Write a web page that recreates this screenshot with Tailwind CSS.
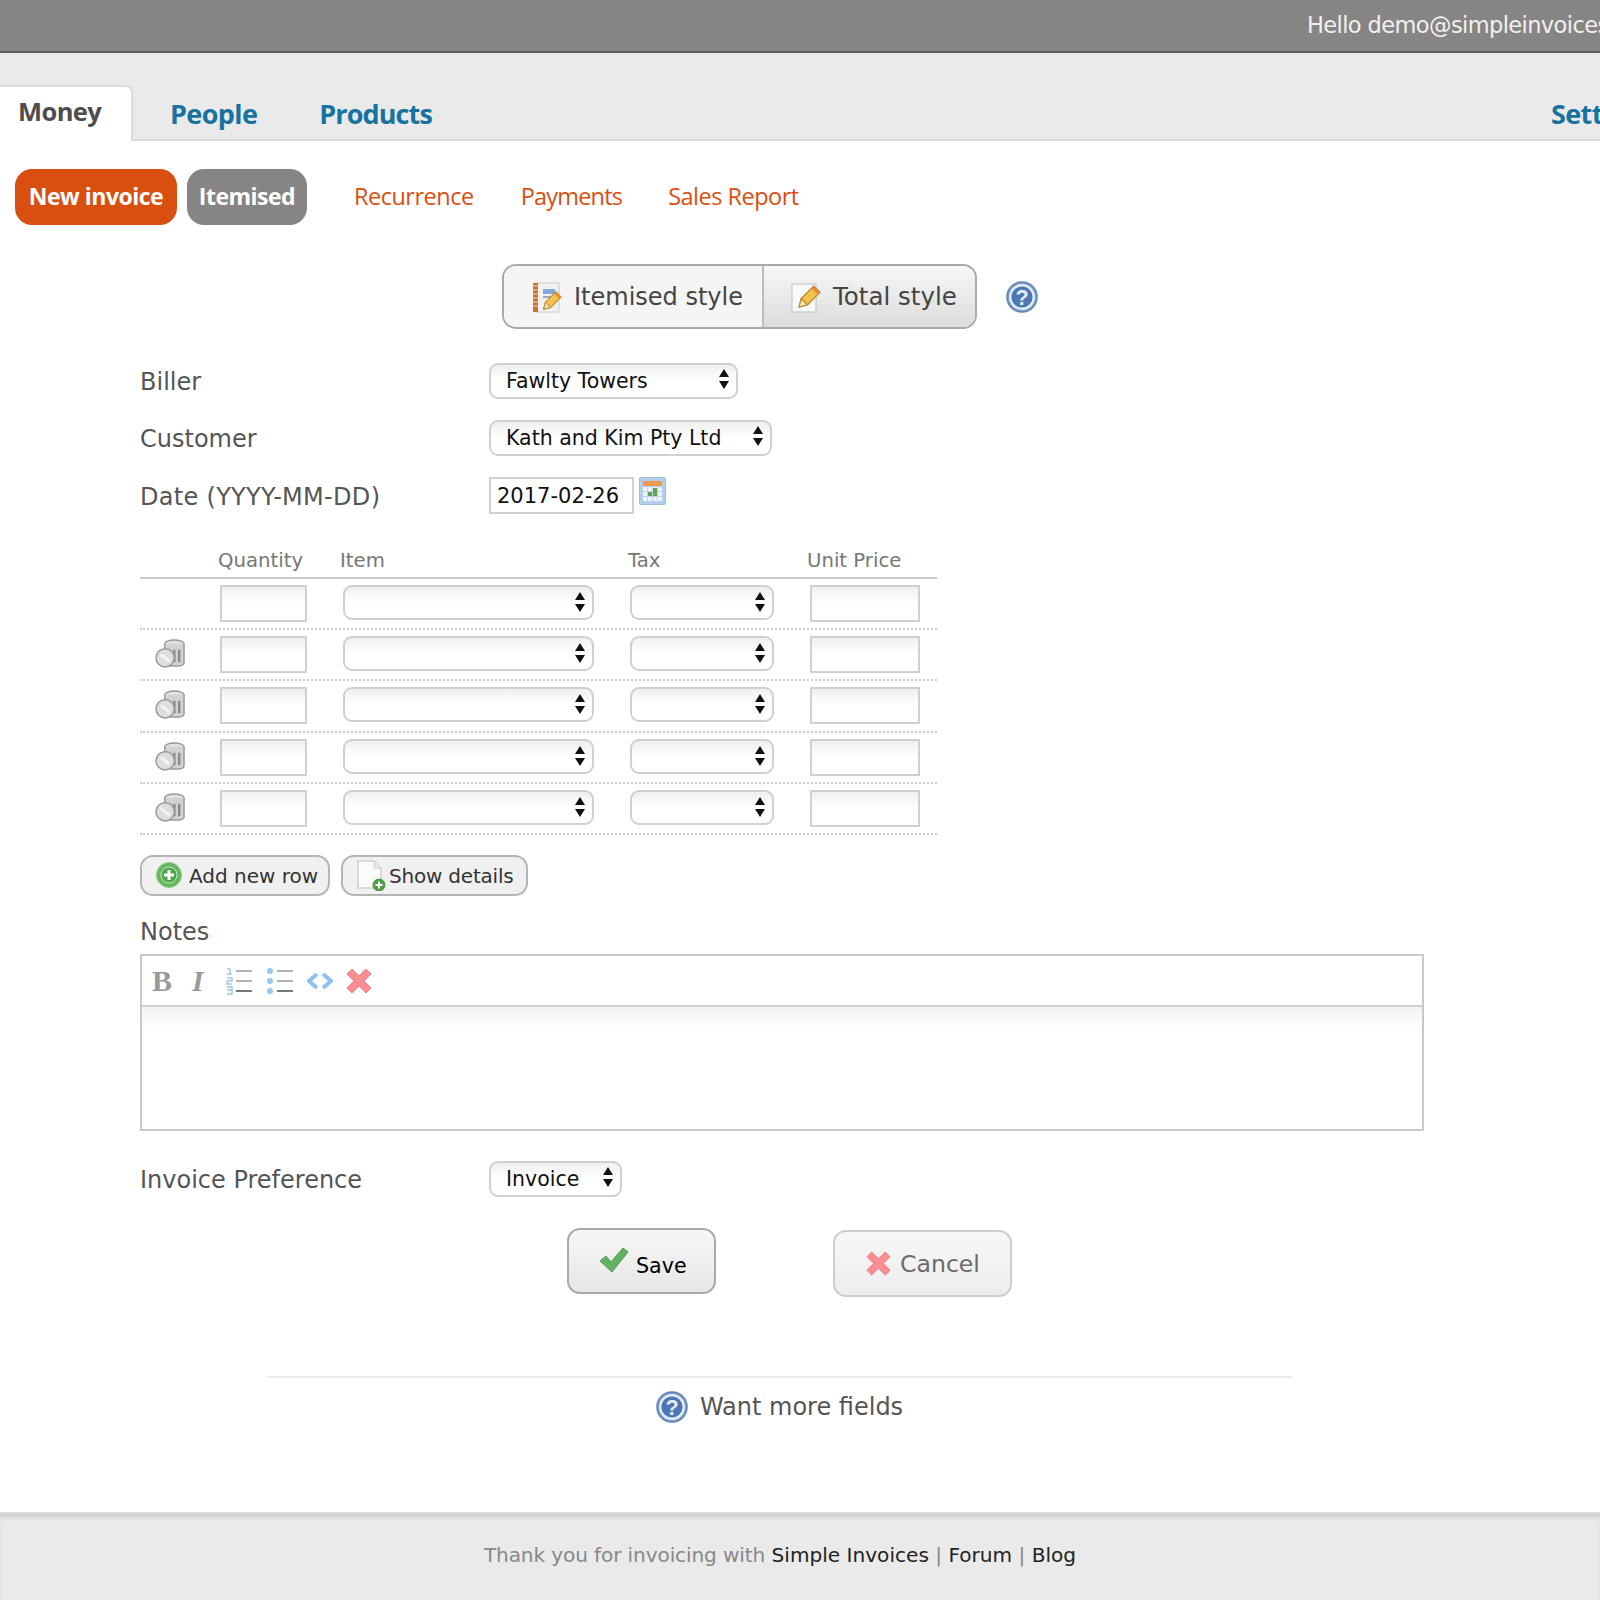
<!DOCTYPE html>
<html lang="en" class="overflow-hidden">
<head>
    <meta charset="UTF-8">
    <title>Simple Invoices - New invoice</title>
    <script src="https://cdn.jsdelivr.net/npm/@tailwindcss/browser@4"></script>
</head>
<body class="w-[1600px] h-[1600px] overflow-hidden bg-white text-[#555] font-['DejaVu_Sans',sans-serif]">

    <!-- shared icons -->
    <svg class="hidden" width="0" height="0">
        <symbol id="arrows" viewBox="0 0 12 22"><path d="M6 1l5 8H1zM6 21l-5-8h10z" fill="#111"/></symbol>
        <symbol id="trash" viewBox="0 0 32 30">
            <ellipse cx="20" cy="5" rx="10" ry="4" fill="#e2e2e2" stroke="#999" stroke-width="1.5"/>
            <path d="M10 5v20c0 2 4 3 10 3s10-1 10-3V5" fill="#d2d2d2" stroke="#999" stroke-width="1.5"/>
            <path d="M20 11v13M25 11v13" stroke="#8b8b8b" stroke-width="2.5"/>
            <circle cx="10.5" cy="19.5" r="9.5" fill="#dedede" stroke="#9a9a9a" stroke-width="1.5"/>
            <path d="M6 16l9 7" stroke="#f5f5f5" stroke-width="3"/>
        </symbol>
        <symbol id="help" viewBox="0 0 34 34">
            <circle cx="17" cy="17" r="16" fill="#7f9fcb" stroke="#5d84b9" stroke-width="1.5"/>
            <circle cx="17" cy="17" r="12.5" fill="#4d77b2" stroke="#e6eef8" stroke-width="2.5"/>
            <text x="17" y="25" text-anchor="middle" font-size="23" font-weight="700" fill="#e8eef7" font-family="Liberation Sans, sans-serif">?</text>
        </symbol>
        <symbol id="cross" viewBox="0 0 28 28"><path d="M7 2l7 7 7-7 5 5-7 7 7 7-5 5-7-7-7 7-5-5 7-7-7-7z" fill="#fb8e93" stroke="#f27d83" stroke-width="1"/></symbol>
        <symbol id="pencil" viewBox="0 0 24 24">
            <path d="M3 22l2-8L17 2l6 6-12 12z" fill="#f2c14e" stroke="#b9822a" stroke-width="1.2"/>
            <path d="M3 22l2-8 6 6z" fill="#f7e3b5" stroke="#b9822a" stroke-width="1"/>
            <path d="M15 4l6 6 2-2-6-6z" fill="#e58b3a"/>
        </symbol>
    </svg>

    <header class="h-[53px] bg-[#868583] border-b-2 border-[#5f5e5c] pl-[1307px] pt-[9px] text-[22.5px] tracking-[-0.6px] leading-[32px] text-[#f1f1f1] whitespace-nowrap overflow-hidden">Hello demo@simpleinvoices</header>

    <nav class="h-[88px] bg-[#eaeaea] border-b-2 border-[#dcdcdc] flex items-end font-['Open_Sans',sans-serif] font-bold text-[27px] tracking-[-0.6px] text-[#17729f] whitespace-nowrap">
        <a class="shrink-0 w-[133px] h-[56px] -mb-[2px] bg-white border-t-2 border-r-2 border-[#dcdcdc] rounded-tr-[8px] pl-[18px] pt-[5px] text-[25.5px] text-[#4d4d4d]">Money</a>
        <a class="shrink-0 ml-[37px] pb-[5px]">People</a>
        <a class="shrink-0 ml-[62px] pb-[5px] tracking-[-0.9px]">Products</a>
        <a class="shrink-0 ml-[1119px] pb-[5px]">Sett</a>
    </nav>

    <div class="mt-[28px] ml-[15px] h-[56px] flex items-center font-['Open_Sans',sans-serif] text-[23.5px] tracking-[-0.5px] text-[#d94f10] whitespace-nowrap">
        <a class="w-[162px] h-[56px] flex items-center justify-center rounded-[17px] bg-[#d94f10] pb-[2px] text-[23px] text-white font-bold">New invoice</a>
        <a class="ml-[10px] w-[120px] h-[56px] flex items-center justify-center rounded-[17px] bg-[#868583] pb-[2px] text-[23px] text-white font-bold">Itemised</a>
        <a class="ml-[47px]">Recurrence</a>
        <a class="ml-[47px] tracking-[-0.8px]">Payments</a>
        <a class="ml-[46px]">Sales Report</a>
    </div>

    <!-- invoice style switch -->
    <div class="mt-[39px] ml-[502px] flex items-center">
        <div class="w-[475px] h-[65px] flex border-2 border-[#a9a9a9] rounded-[14px] overflow-hidden text-[#444] whitespace-nowrap">
            <a class="w-[260px] bg-[#f5f5f5] border-r-2 border-[#bdbdbd] flex items-center pl-[28px]">
                <svg width="30" height="32" viewBox="0 0 30 32" class="shrink-0">
                    <rect x="3" y="2" width="24" height="29" fill="#f1f1f1" stroke="#ccc"/>
                    <rect x="1" y="2" width="5" height="29" fill="#c8742f"/>
                    <path d="M1 5h5M1 9h5M1 13h5M1 17h5M1 21h5M1 25h5" stroke="#f0d9bf" stroke-width="1"/>
                    <path d="M11 8h12v5H11z" fill="#7fa8dc"/>
                    <path d="M11 16h8" stroke="#9ab" stroke-width="2"/>
                    <use href="#pencil" x="9" y="9" width="21" height="21"/>
                </svg>
                <span class="ml-[12px] pt-[1px] text-[24px]">Itemised style</span>
            </a>
            <a class="flex-1 bg-linear-to-b from-[#f7f7f7] to-[#dcdcdc] flex items-center pl-[27px]">
                <svg width="30" height="32" viewBox="0 0 30 32" class="shrink-0">
                    <rect x="1" y="3" width="24" height="28" fill="#fafafa" stroke="#cfcfcf" stroke-width="1.5"/>
                    <use href="#pencil" x="5" y="3" width="25" height="25"/>
                </svg>
                <span class="ml-[12px] pt-[1px] text-[24.5px]">Total style</span>
            </a>
        </div>
        <svg width="32" height="34" class="ml-[29px]"><use href="#help"/></svg>
    </div>

    <main class="pl-[140px] text-[24px]">
        <div class="mt-[33px] h-[36px] flex items-center">
            <label class="w-[349px] pt-[3px]">Biller</label>
            <div class="relative w-[249px] h-[36px]">
                <select class="w-full h-full appearance-none rounded-[9px] border-2 border-[#d0d0d0] bg-linear-to-b from-[#eef0f0] to-white to-50% pl-[15px] text-[20.5px] text-[#111]"><option>Fawlty Towers</option></select>
                <svg class="absolute right-[8px] top-[6px] pointer-events-none" width="12" height="22"><use href="#arrows"/></svg>
            </div>
        </div>
        <div class="mt-[21px] h-[36px] flex items-center">
            <label class="w-[349px] pt-[4px]">Customer</label>
            <div class="relative w-[283px] h-[36px]">
                <select class="w-full h-full appearance-none rounded-[9px] border-2 border-[#d0d0d0] bg-linear-to-b from-[#eef0f0] to-white to-50% pl-[15px] text-[20.5px] text-[#111]"><option>Kath and Kim Pty Ltd</option></select>
                <svg class="absolute right-[8px] top-[6px] pointer-events-none" width="12" height="22"><use href="#arrows"/></svg>
            </div>
        </div>
        <div class="mt-[22px] h-[37px] flex items-center">
            <label class="w-[349px] pt-[3px] tracking-[0.3px]">Date (YYYY-MM-DD)</label>
            <input value="2017-02-26" class="w-[145px] h-[37px] border-2 border-[#d0d0d0] pl-[6px] pt-[1px] text-[21px] text-[#111]">
            <svg width="27" height="28" viewBox="0 0 27 28" class="ml-[5px] self-start">
                <rect x="0.5" y="0.5" width="26" height="27" rx="1" fill="#b4cfee" stroke="#9cbce0"/>
                <rect x="4" y="4" width="19" height="5" fill="#f59a4c"/>
                <rect x="4" y="10" width="19" height="14" fill="#eef3fa"/>
                <path d="M4 14.500h19M4 19.500h19M8.500 10v14M13.500 10v14M18.500 10v14" stroke="#c6d3e4" stroke-width="1"/>
                <path d="M9 15h4v4H9zM14 11h4v4h-4zM14 15h4v4h-4z" fill="#57a55a"/>
            </svg>
        </div>

        <!-- invoice lines -->
        <div class="mt-[33px] w-[797px]">
            <div class="h-[32px] flex border-b-2 border-[#c9c9c9] pt-[1px] text-[19.7px] leading-[26px] text-[#777]">
                <span class="ml-[78px] w-[122px]">Quantity</span>
                <span class="w-[288px]">Item</span>
                <span class="w-[179px]">Tax</span>
                <span>Unit Price</span>
            </div>
            <div class="h-[51.2px] flex items-start pt-[6px] border-b-2 border-dotted border-[#ccc]">
                <span class="w-[80px]"></span>
                <input class="w-[87px] h-[37px] border-2 border-[#d0d0d0] bg-linear-to-b from-[#eef0f0] to-white to-50%">
                <div class="relative ml-[36px] w-[251px] h-[35px]"><select class="w-full h-full appearance-none rounded-[9px] border-2 border-[#d0d0d0] bg-linear-to-b from-[#eef0f0] to-white to-50%"></select><svg class="absolute right-[8px] top-[6px] pointer-events-none" width="12" height="22"><use href="#arrows"/></svg></div>
                <div class="relative ml-[36px] w-[144px] h-[35px]"><select class="w-full h-full appearance-none rounded-[9px] border-2 border-[#d0d0d0] bg-linear-to-b from-[#eef0f0] to-white to-50%"></select><svg class="absolute right-[8px] top-[6px] pointer-events-none" width="12" height="22"><use href="#arrows"/></svg></div>
                <input class="ml-[36px] w-[110px] h-[37px] border-2 border-[#d0d0d0] bg-linear-to-b from-[#eef0f0] to-white to-50%">
            </div>
            <div class="h-[51.2px] flex items-start pt-[6px] border-b-2 border-dotted border-[#ccc]">
                <span class="w-[80px] pl-[15px] pt-[3px]"><svg width="31" height="29"><use href="#trash"/></svg></span>
                <input class="w-[87px] h-[37px] border-2 border-[#d0d0d0] bg-linear-to-b from-[#eef0f0] to-white to-50%">
                <div class="relative ml-[36px] w-[251px] h-[35px]"><select class="w-full h-full appearance-none rounded-[9px] border-2 border-[#d0d0d0] bg-linear-to-b from-[#eef0f0] to-white to-50%"></select><svg class="absolute right-[8px] top-[6px] pointer-events-none" width="12" height="22"><use href="#arrows"/></svg></div>
                <div class="relative ml-[36px] w-[144px] h-[35px]"><select class="w-full h-full appearance-none rounded-[9px] border-2 border-[#d0d0d0] bg-linear-to-b from-[#eef0f0] to-white to-50%"></select><svg class="absolute right-[8px] top-[6px] pointer-events-none" width="12" height="22"><use href="#arrows"/></svg></div>
                <input class="ml-[36px] w-[110px] h-[37px] border-2 border-[#d0d0d0] bg-linear-to-b from-[#eef0f0] to-white to-50%">
            </div>
            <div class="h-[51.2px] flex items-start pt-[6px] border-b-2 border-dotted border-[#ccc]">
                <span class="w-[80px] pl-[15px] pt-[3px]"><svg width="31" height="29"><use href="#trash"/></svg></span>
                <input class="w-[87px] h-[37px] border-2 border-[#d0d0d0] bg-linear-to-b from-[#eef0f0] to-white to-50%">
                <div class="relative ml-[36px] w-[251px] h-[35px]"><select class="w-full h-full appearance-none rounded-[9px] border-2 border-[#d0d0d0] bg-linear-to-b from-[#eef0f0] to-white to-50%"></select><svg class="absolute right-[8px] top-[6px] pointer-events-none" width="12" height="22"><use href="#arrows"/></svg></div>
                <div class="relative ml-[36px] w-[144px] h-[35px]"><select class="w-full h-full appearance-none rounded-[9px] border-2 border-[#d0d0d0] bg-linear-to-b from-[#eef0f0] to-white to-50%"></select><svg class="absolute right-[8px] top-[6px] pointer-events-none" width="12" height="22"><use href="#arrows"/></svg></div>
                <input class="ml-[36px] w-[110px] h-[37px] border-2 border-[#d0d0d0] bg-linear-to-b from-[#eef0f0] to-white to-50%">
            </div>
            <div class="h-[51.2px] flex items-start pt-[6px] border-b-2 border-dotted border-[#ccc]">
                <span class="w-[80px] pl-[15px] pt-[3px]"><svg width="31" height="29"><use href="#trash"/></svg></span>
                <input class="w-[87px] h-[37px] border-2 border-[#d0d0d0] bg-linear-to-b from-[#eef0f0] to-white to-50%">
                <div class="relative ml-[36px] w-[251px] h-[35px]"><select class="w-full h-full appearance-none rounded-[9px] border-2 border-[#d0d0d0] bg-linear-to-b from-[#eef0f0] to-white to-50%"></select><svg class="absolute right-[8px] top-[6px] pointer-events-none" width="12" height="22"><use href="#arrows"/></svg></div>
                <div class="relative ml-[36px] w-[144px] h-[35px]"><select class="w-full h-full appearance-none rounded-[9px] border-2 border-[#d0d0d0] bg-linear-to-b from-[#eef0f0] to-white to-50%"></select><svg class="absolute right-[8px] top-[6px] pointer-events-none" width="12" height="22"><use href="#arrows"/></svg></div>
                <input class="ml-[36px] w-[110px] h-[37px] border-2 border-[#d0d0d0] bg-linear-to-b from-[#eef0f0] to-white to-50%">
            </div>
            <div class="h-[51.2px] flex items-start pt-[6px] border-b-2 border-dotted border-[#ccc]">
                <span class="w-[80px] pl-[15px] pt-[3px]"><svg width="31" height="29"><use href="#trash"/></svg></span>
                <input class="w-[87px] h-[37px] border-2 border-[#d0d0d0] bg-linear-to-b from-[#eef0f0] to-white to-50%">
                <div class="relative ml-[36px] w-[251px] h-[35px]"><select class="w-full h-full appearance-none rounded-[9px] border-2 border-[#d0d0d0] bg-linear-to-b from-[#eef0f0] to-white to-50%"></select><svg class="absolute right-[8px] top-[6px] pointer-events-none" width="12" height="22"><use href="#arrows"/></svg></div>
                <div class="relative ml-[36px] w-[144px] h-[35px]"><select class="w-full h-full appearance-none rounded-[9px] border-2 border-[#d0d0d0] bg-linear-to-b from-[#eef0f0] to-white to-50%"></select><svg class="absolute right-[8px] top-[6px] pointer-events-none" width="12" height="22"><use href="#arrows"/></svg></div>
                <input class="ml-[36px] w-[110px] h-[37px] border-2 border-[#d0d0d0] bg-linear-to-b from-[#eef0f0] to-white to-50%">
            </div>
        </div>

        <div class="mt-[20px] flex gap-[11px] text-[20px] text-[#333] whitespace-nowrap">
            <a class="w-[190px] h-[41px] flex items-center pl-[14px] rounded-[13px] border-2 border-[#b5b5b5] bg-[#f0f0f0]">
                <svg width="26" height="26" viewBox="0 0 26 26" class="shrink-0">
                    <circle cx="13" cy="13" r="12.5" fill="#66b85f" stroke="#8dc987"/>
                    <circle cx="13" cy="13" r="8" fill="#4fa549" stroke="#c6e6c2"/>
                    <path d="M13 8v10M8 13h10" stroke="#fff" stroke-width="3"/>
                </svg>
                <span class="ml-[7px] pt-[1px]">Add new row</span>
            </a>
            <a class="w-[187px] h-[41px] flex items-center pl-[13px] rounded-[13px] border-2 border-[#b5b5b5] bg-[#f0f0f0]">
                <svg width="30" height="32" viewBox="0 0 30 32" class="shrink-0">
                    <path d="M2 2h16l7 7v20H2z" fill="#fbfbfb" stroke="#cfcfcf" stroke-width="1.5"/>
                    <path d="M18 2v7h7" fill="#e6e6e6" stroke="#cfcfcf"/>
                    <circle cx="23" cy="26" r="6.5" fill="#4f9f49"/>
                    <path d="M23 22.5v7M19.5 26h7" stroke="#fff" stroke-width="2"/>
                </svg>
                <span class="ml-[3px] pt-[1px] tracking-[-0.2px]">Show details</span>
            </a>
        </div>

        <div class="mt-[19px] h-[39px] pt-[2px] leading-[30px]">Notes</div>

        <div class="w-[1284px] h-[177px] border-2 border-[#c9c9c9]">
            <div class="h-[51px] border-b-2 border-[#d0d0d0] flex items-center pl-[10px] pt-[1px]">
                <span class="w-[40px] font-['Liberation_Serif',serif] font-bold text-[30px] leading-none text-[#999]">B</span>
                <span class="w-[34px] font-['Liberation_Serif',serif] font-bold italic text-[30px] leading-none text-[#999]">I</span>
                <svg width="28" height="28" viewBox="0 0 28 28" class="mr-[12px]">
                    <path d="M1 2h3v5M1 7h5M1 11h5v3H1v3h5M1 20h5v3H1h5v4H1" stroke="#9cc5ef" stroke-width="1.4" fill="none"/>
                    <path d="M10 4h16M10 14h16" stroke="#999" stroke-width="1.6"/><path d="M10 24h16" stroke="#777" stroke-width="2"/>
                </svg>
                <svg width="28" height="28" viewBox="0 0 28 28" class="mr-[13px]">
                    <circle cx="4" cy="4" r="3" fill="#9cc5ef"/><circle cx="4" cy="14" r="3" fill="#9cc5ef"/><circle cx="4" cy="24" r="3" fill="#9cc5ef"/>
                    <path d="M11 4h16M11 14h16" stroke="#999" stroke-width="1.6"/><path d="M11 24h16" stroke="#777" stroke-width="2"/>
                </svg>
                <svg width="26" height="16" viewBox="0 0 26 16" class="mr-[12px]"><path d="M10 1L2 8l8 7M16 1l8 7-8 7" stroke="#8fc0f0" stroke-width="4" fill="none"/></svg>
                <svg width="28" height="28"><use href="#cross"/></svg>
            </div>
            <div class="h-[20px] bg-linear-to-b from-[#f0f2f2] to-white"></div>
        </div>

        <div class="mt-[29px] h-[36px] flex items-center">
            <label class="w-[349px] pt-[4px]">Invoice Preference</label>
            <div class="relative w-[133px] h-[36px]">
                <select class="w-full h-full appearance-none rounded-[9px] border-2 border-[#d0d0d0] bg-linear-to-b from-[#eef0f0] to-white to-50% pl-[15px] text-[20.5px] text-[#111]"><option>Invoice</option></select>
                <svg class="absolute right-[8px] top-[6px] pointer-events-none" width="12" height="22"><use href="#arrows"/></svg>
            </div>
        </div>

        <div class="mt-[32px] ml-[427px] flex items-start whitespace-nowrap">
            <button class="w-[149px] h-[66px] flex items-center pl-[30px] rounded-[13px] border-2 border-[#a9a9a9] bg-linear-to-b from-[#f7f7f7] to-[#e6e6e6] text-[20.6px] text-black">
                <svg width="30" height="26" viewBox="0 0 30 26" class="shrink-0 -mt-[1px]"><path d="M1 14l6-5 5 6L24 1l5 4-16 20z" fill="#62b262" stroke="#4f9c50"/></svg>
                <span class="ml-[7px] pt-[12px]">Save</span>
            </button>
            <button class="mt-[2px] ml-[117px] w-[179px] h-[67px] flex items-center pl-[30px] rounded-[13px] border-2 border-[#cdcdcd] bg-linear-to-b from-[#f7f7f7] to-[#ededed] text-[23.6px] text-[#6b6b6b]">
                <svg width="27" height="27" class="shrink-0"><use href="#cross"/></svg>
                <span class="ml-[8px] pt-[2px]">Cancel</span>
            </button>
        </div>
    </main>

    <div class="mt-[79px] ml-[267px] w-[1025px] border-t-2 border-[#ececec] flex items-center justify-center pt-[11px] text-[24px]">
        <svg width="32" height="32" class="mr-[12px]"><use href="#help"/></svg>
        <span>Want more fields</span>
    </div>

    <footer class="absolute left-0 top-[1512px] w-[1600px] h-[88px] bg-[#eaeaea] border-t-2 border-[#dcdcdc] shadow-[inset_0_5px_5px_-2px_#ccc] pt-[26px] pr-[40px] text-center text-[20.1px] text-[#888] whitespace-nowrap">
        <span class="tracking-[-0.12px]">Thank you for invoicing with</span> <a class="text-[#222]">Simple Invoices</a> | <a class="text-[#222]">Forum</a> | <a class="text-[#222]">Blog</a>
    </footer>

</body>
</html>
